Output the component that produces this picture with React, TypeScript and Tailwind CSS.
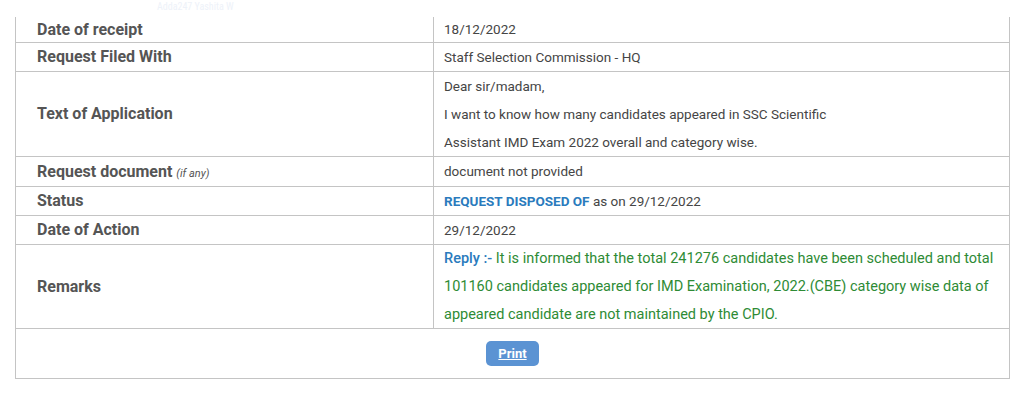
import React from 'react'

const line = 'border-[#c4c4c4]'

type RowProps = {
  label: React.ReactNode
  children: React.ReactNode
  h: string
}

const Row = ({ label, children, h }: RowProps) => (
  <div className={`grid grid-cols-[418px_1fr] border-b ${line} ${h}`}>
    <div className={`flex items-center border-r ${line} pl-[21px] text-[16px] font-bold text-[#555]`}>
      {label}
    </div>
    <div className="flex flex-col justify-center pl-[10px] text-[13.5px] text-[#454545]">
      {children}
    </div>
  </div>
)

const App = () => {
  return (
    <div className="min-h-[394px] bg-white font-['Roboto',sans-serif]">
      <div className="h-[17px] pl-[157px] pt-[1px] text-[10px] leading-[12px] text-[#eef2f9] [font-stretch:75%]">
        Adda247 Yashita W
      </div>
      <div className={`ml-[15px] w-[995px] border-x border-b ${line}`}>
        <Row label="Date of receipt" h="h-[26px]">
          <span>18/12/2022</span>
        </Row>
        <Row label="Request Filed With" h="h-[29px]">
          <span>Staff Selection Commission - HQ</span>
        </Row>
        <Row label="Text of Application" h="h-[85px]">
          <div className="leading-[28px] whitespace-nowrap">
            <div>Dear sir/madam,</div>
            <div>I want to know how many candidates appeared in SSC Scientific</div>
            <div>Assistant IMD Exam 2022 overall and category wise.</div>
          </div>
        </Row>
        <Row
          label={
            <span>
              Request document{' '}
              <i className="text-[11px] font-normal text-[#555]">(if any)</i>
            </span>
          }
          h="h-[30px]"
        >
          <span>document not provided</span>
        </Row>
        <Row label="Status" h="h-[29px]">
          <span>
            <b className="text-[#2a7bbd]">REQUEST DISPOSED OF</b> as on 29/12/2022
          </span>
        </Row>
        <Row label="Date of Action" h="h-[29px]">
          <span>29/12/2022</span>
        </Row>
        <Row label="Remarks" h="h-[84px]">
          <div className="whitespace-nowrap text-[14.5px] leading-[28px] text-[#2e8b35]">
            <div>
              <span className="font-medium text-[#2a7bbd]">Reply :-</span> It is informed that the total 241276 candidates have been scheduled and total
            </div>
            <div>101160 candidates appeared for IMD Examination, 2022.(CBE) category wise data of</div>
            <div>appeared candidate are not maintained by the CPIO.</div>
          </div>
        </Row>
        <div className="flex h-[49px] items-center justify-center">
          <button className="h-[25px] w-[53px] rounded-[5px] bg-[#5b93d3] text-[13px] font-bold text-white underline">
            Print
          </button>
        </div>
      </div>
    </div>
  )
}

export default App
